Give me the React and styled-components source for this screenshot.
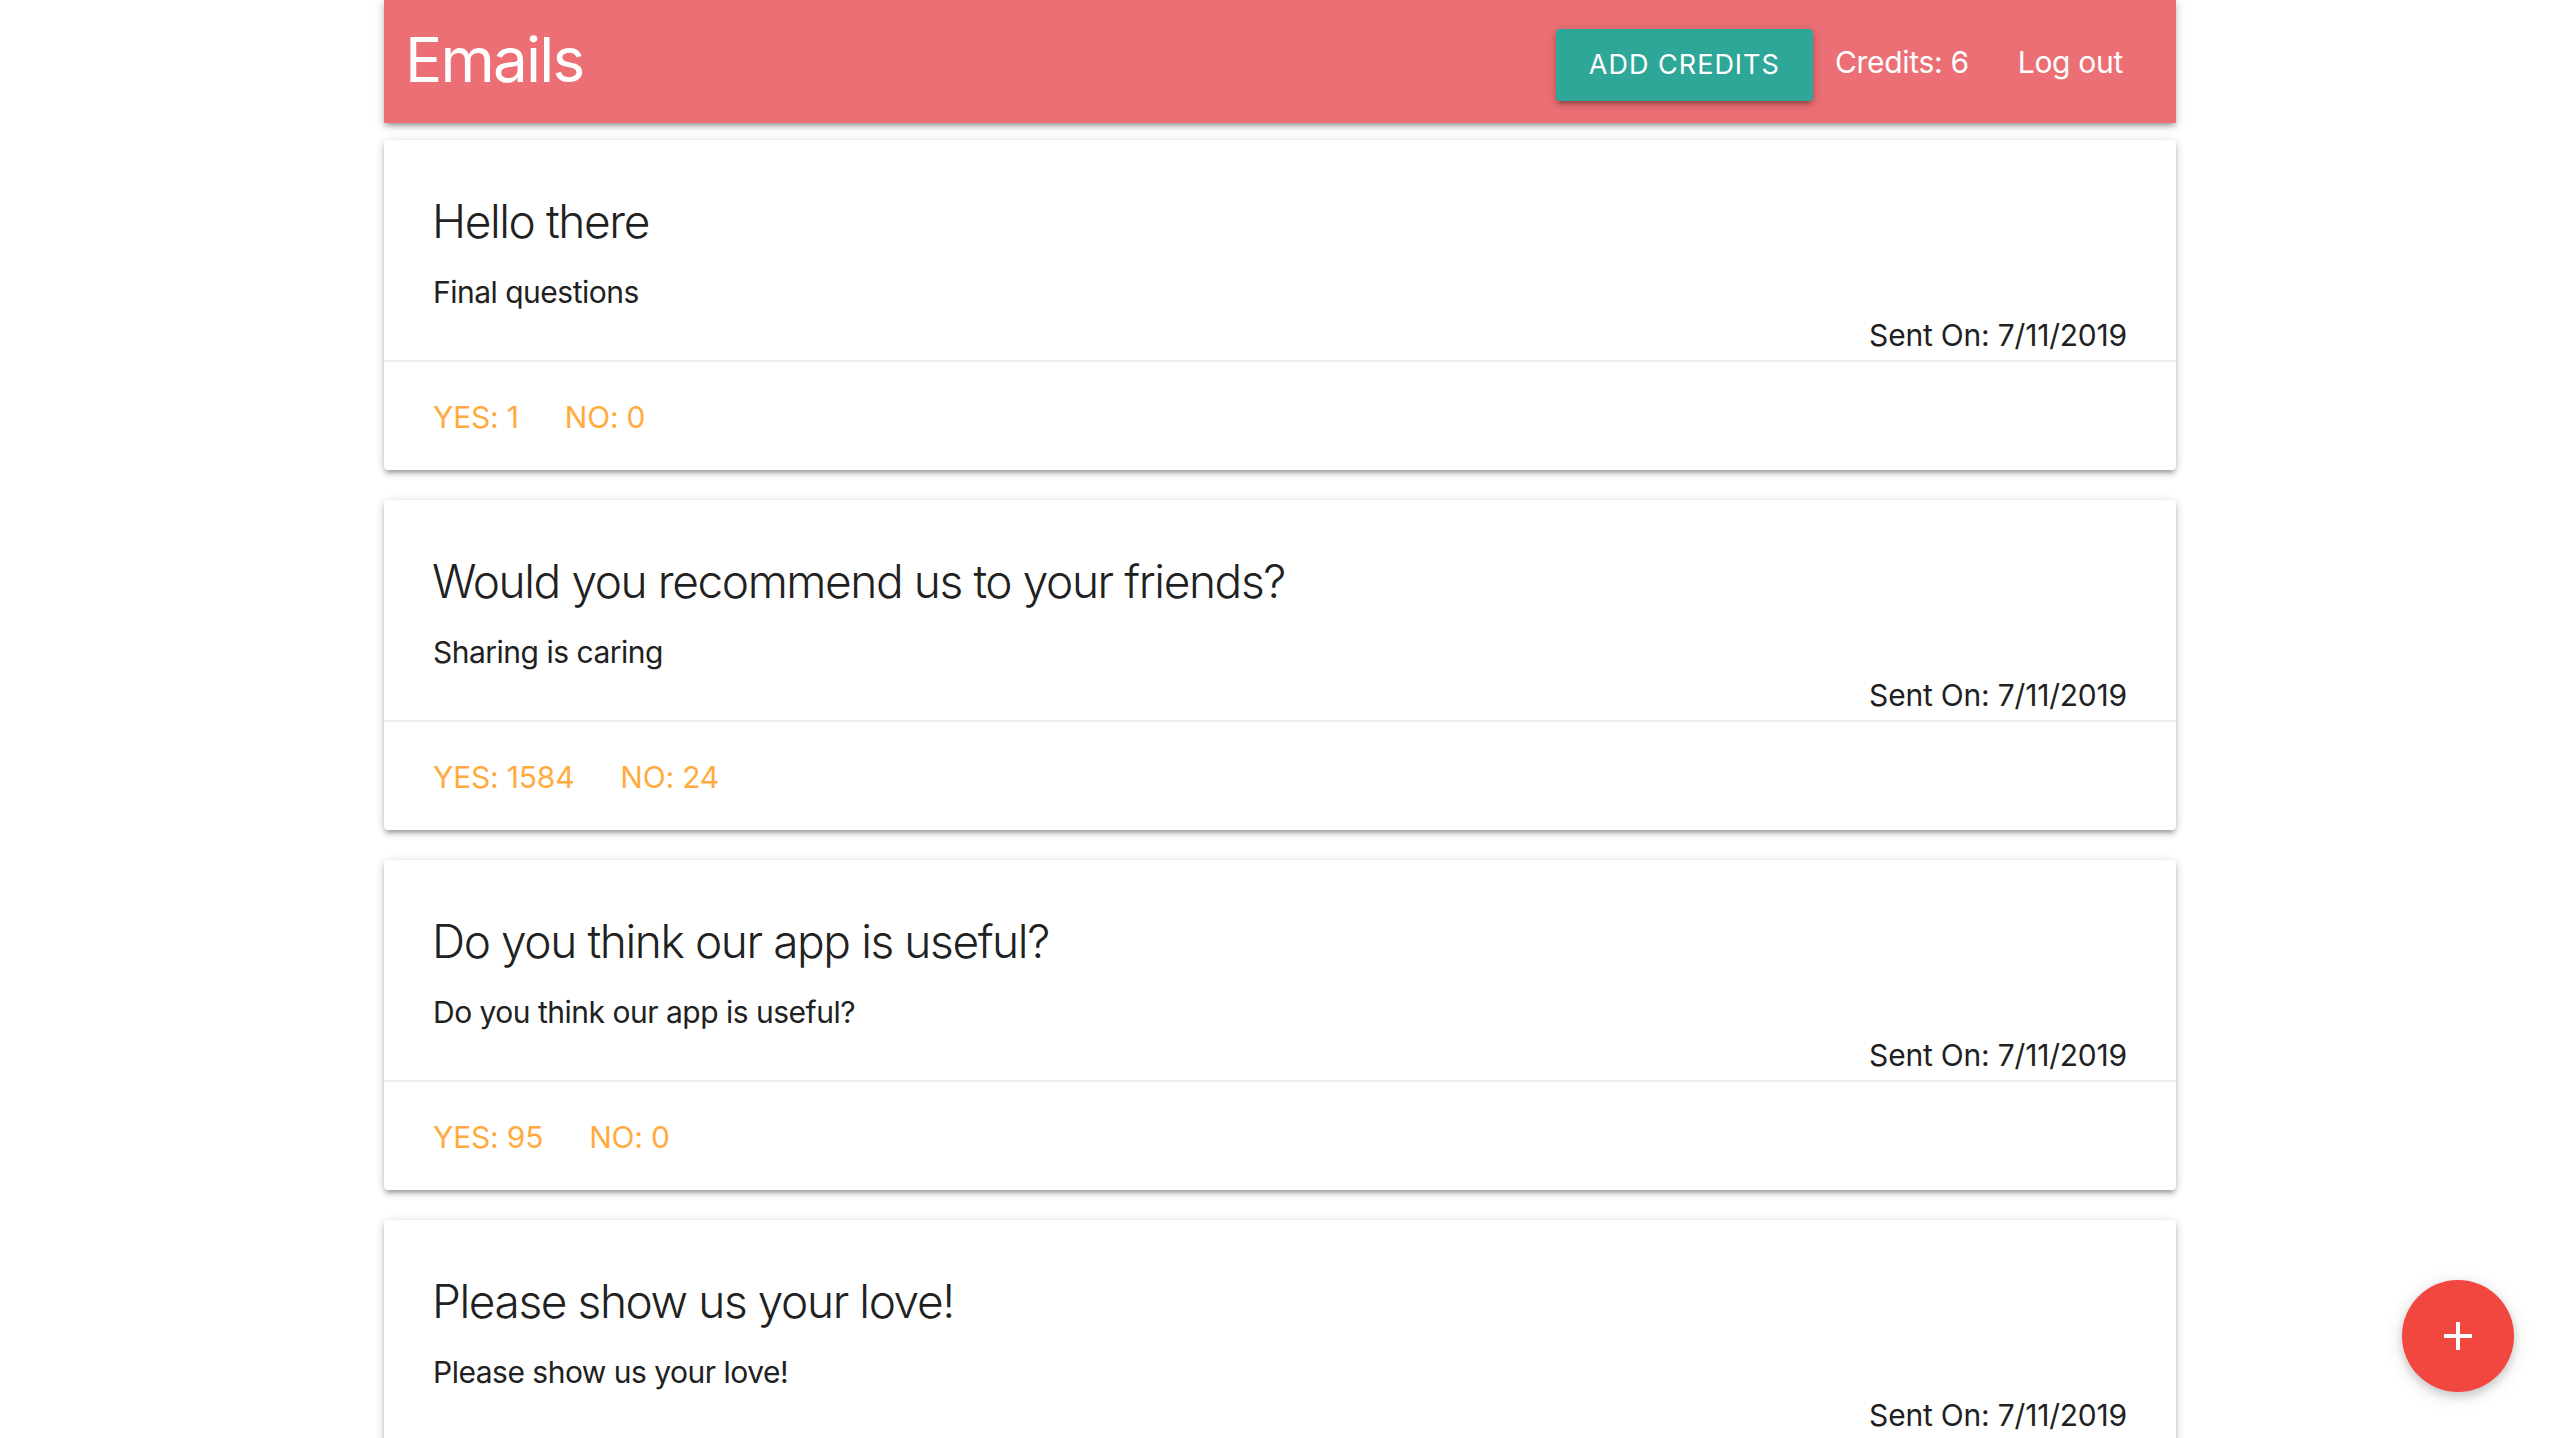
import React from "react";
import styled, { createGlobalStyle } from "styled-components";

const GlobalStyle = createGlobalStyle`
  html, body {
    margin: 0;
    padding: 0;
    background: #ffffff;
    font-family: Inter, "Liberation Sans", sans-serif;
    color: rgba(0, 0, 0, 0.87);
  }
`;

const Container = styled.div`
  width: 70%;
  margin: 0 auto;
`;

const Nav = styled.nav`
  height: 123px;
  background: #eb6f74;
  display: flex;
  align-items: center;
  justify-content: space-between;
  box-shadow: 0 4px 4px 0 rgba(0, 0, 0, 0.14), 0 6px 2px -4px rgba(0, 0, 0, 0.12),
    0 2px 10px 0 rgba(0, 0, 0, 0.2);
`;

const Brand = styled.a`
  color: #fff;
  font-size: 62px;
  padding-left: 21px;
  letter-spacing: -1.8px;
  margin-top: -4px;
`;

const NavList = styled.ul`
  display: flex;
  align-items: center;
  list-style: none;
  margin: 0;
  padding: 0 24px 0 0;
`;

const NavItem = styled.li`
  display: flex;
  align-items: center;
  margin: ${(p) => p.$margin || "0"};
`;

const AddCredits = styled.button`
  height: 72px;
  padding: 0 33px;
  border: none;
  border-radius: 4px;
  background: #2ea698;
  color: #fff;
  font-family: inherit;
  font-size: 27px;
  letter-spacing: 1px;
  text-transform: uppercase;
  margin-top: 6px;
  box-shadow: 0 4px 4px 0 rgba(0, 0, 0, 0.14), 0 6px 2px -4px rgba(0, 0, 0, 0.12),
    0 2px 10px 0 rgba(0, 0, 0, 0.2);
`;

const NavLink = styled.a`
  color: #fff;
  font-size: 30px;
  letter-spacing: -0.3px;
  padding: 0 ${(p) => p.$pad || "0"};
`;

const List = styled.div`
  display: flex;
  flex-direction: column;
  gap: 30px;
  padding-top: 17px;
`;

const Card = styled.div`
  background: #fff;
  border-radius: 4px;
  box-shadow: 0 4px 4px 0 rgba(0, 0, 0, 0.14), 0 6px 2px -4px rgba(0, 0, 0, 0.12),
    0 2px 10px 0 rgba(0, 0, 0, 0.2);
`;

const CardContent = styled.div`
  padding: 51px 49px 3px;
`;

const CardTitle = styled.span`
  display: block;
  font-size: 46px;
  font-weight: 300;
  line-height: 61px;
  letter-spacing: -1.4px;
  margin-bottom: 19px;
  margin-left: -1px;
  color: #212121;
`;

const Text = styled.p`
  margin: 0;
  font-size: 30px;
  line-height: 43px;
  letter-spacing: ${(p) => (p.$right ? "-0.2px" : "-0.5px")};
  text-align: ${(p) => (p.$right ? "right" : "left")};
  color: #212121;
`;

const CardAction = styled.div`
  border-top: 2px solid rgba(160, 160, 160, 0.2);
  padding: 32px 49px 30px;
  display: flex;
  gap: 46px;
`;

const Tally = styled.a`
  color: #ffab40;
  font-size: 30px;
  line-height: 46px;
  letter-spacing: -0.2px;
  text-transform: uppercase;
`;

const Fab = styled.button`
  position: fixed;
  right: 46px;
  bottom: 46px;
  width: 112px;
  height: 112px;
  border-radius: 50%;
  border: none;
  background: #f2473f;
  display: flex;
  align-items: center;
  justify-content: center;
  box-shadow: 0 4px 10px 0 rgba(0, 0, 0, 0.16), 0 4px 20px 0 rgba(0, 0, 0, 0.12);
`;

const surveys = [
  { title: "Hello there", body: "Final questions", yes: 1, no: 0 },
  { title: "Would you recommend us to your friends?", body: "Sharing is caring", yes: 1584, no: 24 },
  { title: "Do you think our app is useful?", body: "Do you think our app is useful?", yes: 95, no: 0 },
  { title: "Please show us your love!", body: "Please show us your love!", yes: 12, no: 0 },
];

export default function App() {
  return (
    <>
      <GlobalStyle />
      <Container>
        <Nav>
          <Brand>Emails</Brand>
          <NavList>
            <NavItem>
              <AddCredits>Add Credits</AddCredits>
            </NavItem>
            <NavItem $margin="0 20px 0 22px">
              <NavLink>Credits: 6</NavLink>
            </NavItem>
            <NavItem>
              <NavLink $pad="29px">Log out</NavLink>
            </NavItem>
          </NavList>
        </Nav>
        <List>
          {surveys.map((s) => (
            <Card key={s.title}>
              <CardContent>
                <CardTitle>{s.title}</CardTitle>
                <Text>{s.body}</Text>
                <Text $right>Sent On: 7/11/2019</Text>
              </CardContent>
              <CardAction>
                <Tally>Yes: {s.yes}</Tally>
                <Tally>No: {s.no}</Tally>
              </CardAction>
            </Card>
          ))}
        </List>
      </Container>
      <Fab>
        <svg width="28" height="28" viewBox="0 0 28 28">
          <rect x="0" y="12" width="28" height="4" fill="#fff" />
          <rect x="12" y="0" width="4" height="28" fill="#fff" />
        </svg>
      </Fab>
    </>
  );
}
